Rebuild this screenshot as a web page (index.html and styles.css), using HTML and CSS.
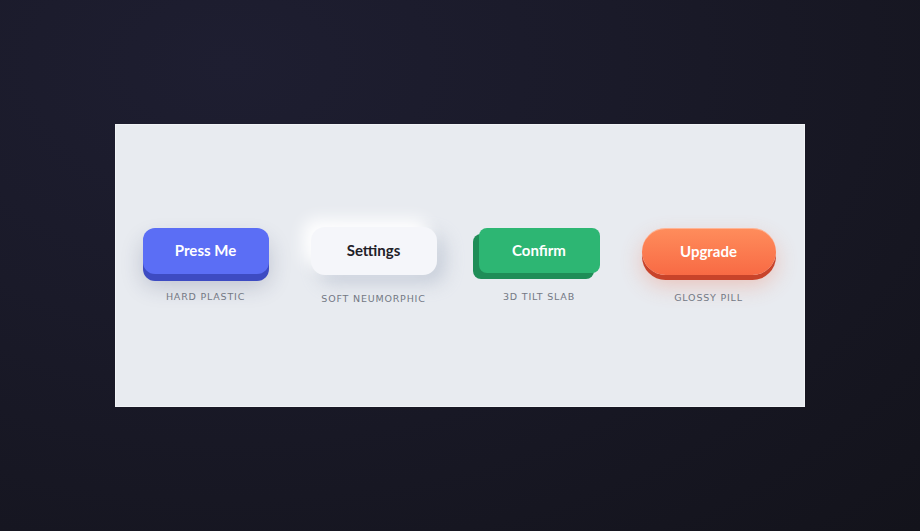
FILE: index.html
```html
<!DOCTYPE html>
<html>
<head>
<meta charset="utf-8">
<link rel="stylesheet" href="styles.css">
</head>
<body>
<div class="panel">
  <div class="item">
    <button class="btn plastic">Press Me</button>
    <div class="label">HARD PLASTIC</div>
  </div>
  <div class="item">
    <button class="btn neu">Settings</button>
    <div class="label label-neu">SOFT NEUMORPHIC</div>
  </div>
  <div class="item">
    <button class="btn slab">Confirm</button>
    <div class="label label-slab">3D TILT SLAB</div>
  </div>
  <div class="item">
    <button class="btn pill">Upgrade</button>
    <div class="label">GLOSSY PILL</div>
  </div>
</div>
</body>
</html>
```
FILE: styles.css
```css
html, body {
  margin: 0;
  height: 100%;
}
body {
  background: radial-gradient(ellipse at 25% 12%, #1e1e31 0%, #1a1a29 40%, #13131b 100%);
  display: flex;
  align-items: center;
  justify-content: center;
  font-family: Lato, "Open Sans", sans-serif;
}
.panel {
  width: 690px;
  height: 283px;
  box-sizing: border-box;
  background: #e8ebf0;
  border: 1px solid #f1f3f6;
  display: flex;
  align-items: flex-start;
  justify-content: center;
  padding-top: 103px;
  padding-right: 2px;
  gap: 42px;
}
.item {
  display: flex;
  flex-direction: column;
  align-items: center;
}
.btn {
  border: none;
  font-family: inherit;
  font-weight: 700;
  font-size: 15px;
  color: #fff;
  cursor: pointer;
  padding: 0 0 2px 0;
}
.plastic {
  width: 126px;
  height: 46px;
  border-radius: 12px;
  background: #5b6ef5;
  box-shadow: 0 7px 0 #3d4bc2, 0 12px 22px rgba(40, 50, 90, 0.22);
}
.neu {
  width: 126px;
  height: 48px;
  margin-top: -1px;
  border-radius: 14px;
  background: #f5f6fa;
  color: #1f2128;
  box-shadow: -8px -8px 16px #ffffff, 8px 8px 18px rgba(160, 170, 190, 0.45);
}
.slab {
  width: 121px;
  height: 45px;
  border-radius: 8px;
  background: #2db673;
  box-shadow: -6px 6px 0 #1f8d57;
}
.pill {
  width: 134px;
  height: 47px;
  border-radius: 24px;
  background: linear-gradient(180deg, #ff8d5c 0%, #f86a44 100%);
  box-shadow: inset 0 1px 0 rgba(255, 255, 255, 0.35), 0 5px 0 #c8432a, 0 10px 22px rgba(240, 100, 60, 0.3);
}
.label {
  margin-top: 17px;
  font-family: "DejaVu Sans", sans-serif;
  font-size: 9.5px;
  letter-spacing: 0.8px;
  color: #737884;
}
.label-neu {
  margin-top: 18px;
}
.label-slab {
  margin-top: 18px;
}
```
